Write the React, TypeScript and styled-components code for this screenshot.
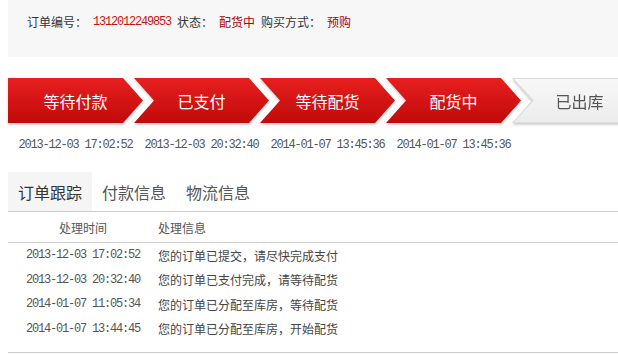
import React from 'react';
import styled, { createGlobalStyle, css } from 'styled-components';

const GlobalStyle = createGlobalStyle`
  body {
    margin: 0;
    background: #fff;
    font-family: "Noto Sans CJK SC", "Liberation Sans", sans-serif;
    color: #333;
    overflow: hidden;
  }
`;

const STEP_W = 135;
const ARROW = 20;
const OVERLAP = 9;

const steps = [
  { label: '等待付款', time: '2013-12-03 17:02:52', done: true },
  { label: '已支付', time: '2013-12-03 20:32:40', done: true },
  { label: '等待配货', time: '2014-01-07 13:45:36', done: true },
  { label: '配货中', time: '2014-01-07 13:45:36', done: true },
  { label: '已出库', time: '', done: false },
];

const logs = [
  { time: '2013-12-03 17:02:52', info: '您的订单已提交，请尽快完成支付' },
  { time: '2013-12-03 20:32:40', info: '您的订单已支付完成，请等待配货' },
  { time: '2014-01-07 11:05:34', info: '您的订单已分配至库房，等待配货' },
  { time: '2014-01-07 13:44:45', info: '您的订单已分配至库房，开始配货' },
];

const tabs = ['订单跟踪', '付款信息', '物流信息'];

const App: React.FC = () => {
  return (
    <Page>
      <GlobalStyle />
      <OrderBar>
        <Label>订单编号：</Label>
        <Number>1312012249853</Number>
        <Label>状态：</Label>
        <Value>配货中</Value>
        <Label>购买方式：</Label>
        <Value>预购</Value>
      </OrderBar>

      <Steps>
        {steps.map((s, i) => (
          <Step key={s.label} $first={i === 0} $done={s.done}>
            <StepText $done={s.done}>{s.label}</StepText>
          </Step>
        ))}
      </Steps>

      <Dates>
        {steps.map((s, i) => (
          <DateCell key={i} $first={i === 0}>{s.time}</DateCell>
        ))}
      </Dates>

      <Tabs>
        {tabs.map((t, i) => (
          <Tab key={t} $active={i === 0}>{t}</Tab>
        ))}
      </Tabs>

      <Table>
        <HeadRow>
          <TimeHead>处理时间</TimeHead>
          <InfoHead>处理信息</InfoHead>
        </HeadRow>
        <Body>
          {logs.map((l) => (
            <Row key={l.time}>
              <TimeCell>{l.time}</TimeCell>
              <InfoCell>{l.info}</InfoCell>
            </Row>
          ))}
        </Body>
      </Table>
    </Page>
  );
};

// SimSun-like digits: 6px per character
const mono = css`
  font-family: "Liberation Mono", monospace;
  font-size: 12px;
  letter-spacing: -1.2px;
`;

const Page = styled.div`
  padding-left: 8px;
  width: 610px;
  overflow: hidden;
`;

const OrderBar = styled.div`
  width: 610px;
  height: 57px;
  box-sizing: border-box;
  background: #f7f7f7;
  padding: 13px 0 0 19px;
  display: flex;
  align-items: flex-start;
  font-size: 12px;
  line-height: 18px;
`;

const Label = styled.span`
  color: #333;
  margin-right: 6px;
`;

const Number = styled.span`
  ${mono}
  color: #d01010;
  margin-right: 6px;
`;

const Value = styled.span`
  color: #b00000;
  margin-right: 6px;
`;

const Steps = styled.div`
  display: flex;
  margin-top: 21px;
  height: 45px;
  filter: drop-shadow(0 2px 1px rgba(0, 0, 0, 0.18));
`;

const shape = (first: boolean) =>
  first
    ? `polygon(0 0, ${STEP_W - ARROW}px 0, 100% 50%, ${STEP_W - ARROW}px 100%, 0 100%)`
    : `polygon(0 0, ${STEP_W - ARROW}px 0, 100% 50%, ${STEP_W - ARROW}px 100%, 0 100%, ${ARROW}px 50%)`;

const Step = styled.div<{ $first: boolean; $done: boolean }>`
  position: relative;
  flex: 0 0 ${STEP_W}px;
  height: 45px;
  margin-left: ${(p) => (p.$first ? 0 : -OVERLAP)}px;
  display: flex;
  align-items: center;
  justify-content: center;
  clip-path: ${(p) => shape(p.$first)};
  ${(p) =>
    p.$done
      ? css`
          background: linear-gradient(#e71f1f, #c10a0a);
        `
      : css`
          background: #dcdcdc;
          &::before {
            content: '';
            position: absolute;
            inset: 1px 1px 1px 2px;
            clip-path: ${shape(false)};
            background: linear-gradient(#f8f8f8, #ececec);
          }
        `}
`;

const StepText = styled.span<{ $done: boolean }>`
  position: relative;
  font-size: 16px;
  color: ${(p) => (p.$done ? '#fff' : '#555')};
`;

const Dates = styled.div`
  display: flex;
  margin-top: 14px;
  height: 16px;
`;

const DateCell = styled.div<{ $first: boolean }>`
  ${mono}
  flex: 0 0 ${STEP_W}px;
  margin-left: ${(p) => (p.$first ? 0 : -OVERLAP)}px;
  text-align: center;
  line-height: 16px;
  color: #555;
`;

const Tabs = styled.div`
  display: flex;
  margin-top: 19px;
  width: 610px;
  border-bottom: 1px solid #cccccc;
`;

const Tab = styled.div<{ $active: boolean }>`
  width: 84px;
  height: 39px;
  box-sizing: border-box;
  padding-left: 10px;
  display: flex;
  align-items: center;
  font-size: 16px;
  color: ${(p) => (p.$active ? '#333' : '#555')};
  background: ${(p) => (p.$active ? '#f5f5f5' : 'transparent')};
`;

const Table = styled.div`
  width: 610px;
  border-bottom: 1px solid #cccccc;
`;

const HeadRow = styled.div`
  display: flex;
  height: 30px;
  align-items: center;
  border-bottom: 1px solid #cccccc;
  font-size: 12px;
  color: #555;
`;

const TimeHead = styled.div`
  width: 150px;
  text-align: center;
`;

const InfoHead = styled.div``;

const Body = styled.div`
  padding-bottom: 11px;
`;

const Row = styled.div`
  display: flex;
  align-items: center;
  height: 24.5px;
`;

const TimeCell = styled.div`
  ${mono}
  width: 150px;
  text-align: center;
  color: #555;
`;

const InfoCell = styled.div`
  font-size: 12px;
  color: #444;
`;

export default App;
